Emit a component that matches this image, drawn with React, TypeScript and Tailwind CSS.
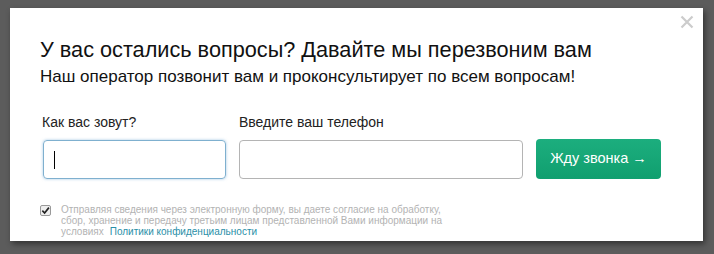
export default function App() {
  return (
    <div
      className="h-[254px] w-[714px] overflow-hidden bg-[#5c5c5c] pl-[10px] pt-[8px]"
      style={{ fontFamily: '"Liberation Sans", Arial, sans-serif' }}
    >
      <div className="relative h-[233px] w-[693px] bg-white shadow-[2px_3px_6px_rgba(0,0,0,0.45)]">
        {/* close */}
        <button className="absolute left-[670px] top-[7px]">
          <svg viewBox="0 0 14 14" className="h-[14px] w-[14px]">
            <path d="M1.5 1.5 L12.5 12.5 M12.5 1.5 L1.5 12.5" stroke="#cccccc" strokeWidth="2.2" />
          </svg>
        </button>

        <div className="pl-[30px] pt-[29px]">
          <h2 className="text-[21.7px] leading-[26px] text-[#111]">
            У вас остались вопросы? Давайте мы перезвоним вам
          </h2>
          <p className="mt-[4px] text-[17px] leading-[20px] text-[#111]">
            Наш оператор позвонит вам и проконсультирует по всем вопросам!
          </p>

          <div className="mt-[27px] flex items-end gap-[13px]">
            <div className="flex flex-col">
              <label className="pl-[2px] text-[14px] leading-[16px] text-[#222]">Как вас зовут?</label>
              <div className="ml-[3px] mt-[10px] flex h-[39px] w-[183px] items-center rounded-[4px] border border-[#7fb0cf] pl-[10px] shadow-[0_0_3px_rgba(102,160,210,0.6)]">
                <span className="h-[18px] w-px bg-black" />
              </div>
            </div>
            <div className="flex flex-col">
              <label className="text-[14px] leading-[16px] text-[#222]">Введите ваш телефон</label>
              <div className="mt-[10px] h-[39px] w-[284px] rounded-[4px] border border-[#b4b4b4]" />
            </div>
            <button className="h-[40px] w-[125px] rounded-[4px] bg-gradient-to-b from-[#1cae7e] to-[#109f6f] text-[14.5px] text-white">
              Жду звонка →
            </button>
          </div>

          <div className="mt-[25px] flex gap-[10px]">
            <div className="mt-[1px] flex h-[11px] w-[11px] shrink-0 items-center justify-center rounded-[2px] border border-[#999] bg-[#eee]">
              <svg viewBox="0 0 10 10" className="h-[9px] w-[9px]">
                <path d="M1.5 5.2 L4 7.8 L8.8 1.8" fill="none" stroke="#222" strokeWidth="1.8" />
              </svg>
            </div>
            <div className="w-[390px] text-[10px] leading-[11px] text-[#b3b3b3]">
              <p>
                Отправляя сведения через электронную форму, вы даете согласие на обработку, сбор, хранение и передачу третьим лицам представленной Вами информации на
              </p>
              <div className="flex gap-[6px]">
                <span>условиях</span>
                <a className="text-[#2a8fa8]">Политики конфиденциальности</a>
              </div>
            </div>
          </div>
        </div>
      </div>
    </div>
  );
}
